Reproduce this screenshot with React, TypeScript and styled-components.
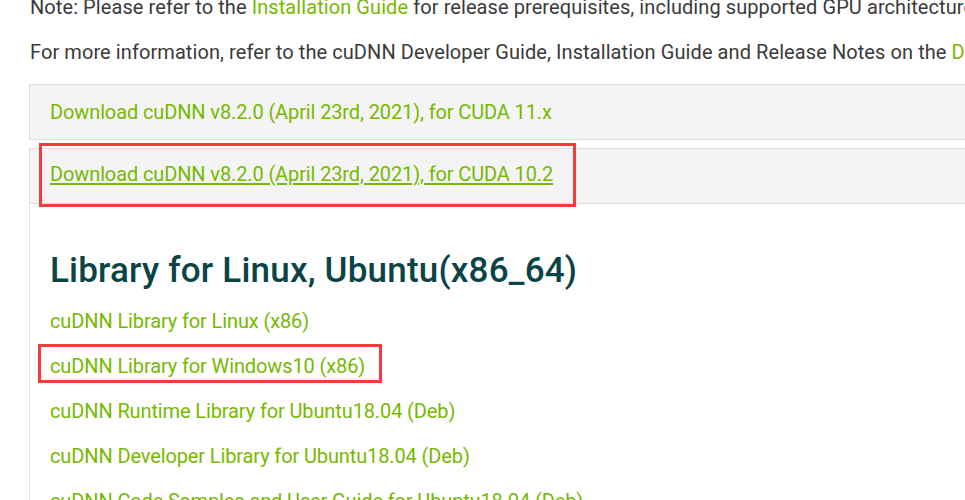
import styled, { createGlobalStyle } from "styled-components";

const GlobalStyle = createGlobalStyle`
  html, body {
    margin: 0;
    padding: 0;
    background: #ffffff;
    overflow: hidden;
  }
  body {
    font-family: "Roboto", "DejaVu Sans", sans-serif;
    -webkit-font-smoothing: antialiased;
  }
`;

const Page = styled.div`
  width: 1200px;
  margin-top: -6px;
  padding-left: 29px;
  font-size: 20px;
  line-height: 27px;
  letter-spacing: -0.12px;
  color: #3a3a3a;
`;

const Note = styled.p`
  margin: 0 0 18px;
  padding-left: 1px;
  letter-spacing: 0.08px;
  white-space: nowrap;
`;

const Link = styled.a<{ $underline?: boolean }>`
  color: #76b900;
  text-decoration: ${(p) => (p.$underline ? "underline" : "none")};
  text-decoration-thickness: 2px;
  text-underline-offset: 2px;
  cursor: pointer;
`;

const Panel = styled.div<{ $shift?: number }>`
  position: relative;
  background: #f4f4f4;
  border: 1px solid #dedede;
  padding: ${(p) => 14 - (p.$shift ?? 0)}px 20px ${(p) => 13 + (p.$shift ?? 0)}px;
  margin-bottom: 8px;
  white-space: nowrap;
`;

const Content = styled.div`
  margin-top: -8px;
  border-left: 1px solid #e4e4e4;
  padding: 46px 20px 40px;
`;

const Heading = styled.h2`
  margin: 0 0 16px;
  font-size: 35px;
  line-height: 42px;
  font-weight: 500;
  letter-spacing: 0.2px;
  color: #0b4446;
  white-space: nowrap;
`;

const LinkList = styled.ul`
  list-style: none;
  margin: 0;
  padding: 0;
`;

const LinkItem = styled.li`
  position: relative;
  margin-bottom: 18px;
  white-space: nowrap;
`;

const Highlight = styled.span<{ $top: number; $left: number; $w: number; $h: number }>`
  position: absolute;
  top: ${(p) => p.$top}px;
  left: ${(p) => p.$left}px;
  width: ${(p) => p.$w}px;
  height: ${(p) => p.$h}px;
  border: 3px solid #f53a3a;
  box-sizing: border-box;
  pointer-events: none;
`;

const libraries = [
  "cuDNN Library for Linux (x86)",
  "cuDNN Library for Windows10 (x86)",
  "cuDNN Runtime Library for Ubuntu18.04 (Deb)",
  "cuDNN Developer Library for Ubuntu18.04 (Deb)",
  "cuDNN Code Samples and User Guide for Ubuntu18.04 (Deb)",
];

export default function App() {
  return (
    <>
      <GlobalStyle />
      <Page>
        <Note>
          Note: Please refer to the <Link>Installation Guide</Link> for release
          prerequisites, including supported GPU architectures and compute
          capabilities, before downloading.
        </Note>
        <Note>
          For more information, refer to the cuDNN Developer Guide, Installation
          Guide and Release Notes on the <Link>Deep Learning SDK Documentation</Link>{" "}
          web page.
        </Note>

        <Panel>
          <Link>Download cuDNN v8.2.0 (April 23rd, 2021), for CUDA 11.x</Link>
        </Panel>
        <Panel $shift={2}>
          <Link $underline>
            Download cuDNN v8.2.0 (April 23rd, 2021), for CUDA 10.2
          </Link>
          <Highlight $top={-6} $left={9} $w={537} $h={64} />
        </Panel>

        <Content>
          <Heading>Library for Linux, Ubuntu(x86_64)</Heading>
          <LinkList>
            {libraries.map((name, i) => (
              <LinkItem key={name}>
                <Link>{name}</Link>
                {i === 1 && <Highlight $top={-9} $left={-12} $w={344} $h={39} />}
              </LinkItem>
            ))}
          </LinkList>
        </Content>
      </Page>
    </>
  );
}
